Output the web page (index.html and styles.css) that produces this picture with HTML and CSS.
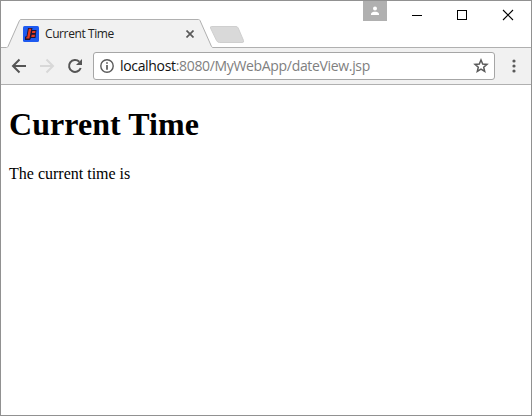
FILE: index.html
```html
<!DOCTYPE html>
<html lang="en">
<head>
<meta charset="utf-8">
<title>Current Time</title>
<link rel="stylesheet" href="styles.css">
</head>
<body>
<div class="window">
  <header class="tabstrip">
    <svg class="tab-shape" width="530" height="47" viewBox="1 1 530 47">
      <path d="M1 47.5H6.500Q7.500 47.5 8 46.5L19.500 20.500Q20 19.5 21 19.5H198.500Q199.500 19.5 200 20.500L211.500 46.500Q212 47.500 213 47.500H531V49H1Z" fill="#f1f1f1"/>
      <path d="M1 47.5H6.500Q7.500 47.500 8 46.500L19.500 20.500Q20 19.500 21 19.500H198.500Q199.500 19.500 200 20.500L211.500 46.500Q212 47.500 213 47.500H531" fill="none" stroke="#b0b0b0"/>
      <path d="M211.500 26.500H236Q237.500 26.500 238.200 28L243.500 40.500Q244.300 42.500 242 42.500H219.500Q217.500 42.500 216.500 40.500L210.500 28Q210 26.500 211.500 26.500Z" fill="#d9d9d9" stroke="#cfcfcf"/>
    </svg>
    <div class="tab">
      <svg class="favicon" width="16" height="16" viewBox="0 0 16 16">
        <rect width="16" height="16" rx="1.500" fill="#1e5af0"/>
        <path d="M5 2H9.500L9 4H13.500L13 7.500L12.500 12H8L7 14H2V10.500H3.500Z" fill="#1c1536"/>
        <path d="M5.800 2.800H8.300L6.400 12.500H3.200V11.200H4.200Z" fill="#e83b20"/>
        <path d="M9.300 5H12.500L12.200 7H8.900ZM8.700 8.800H12L11.600 11H8.200Z" fill="#e83b20"/>
      </svg>
      <span class="tab-title">Current Time</span>
      <svg class="tab-close" width="8" height="8" viewBox="0 0 8 8"><path d="M.5.5L7.500 7.500M7.500.5L.5 7.500" stroke="#5a5a5a" stroke-width="1.700"/></svg>
    </div>
    <div class="controls">
      <div class="profile"><svg width="24" height="20" viewBox="0 0 24 20"><circle cx="12" cy="7.500" r="2" fill="#fff"/><path d="M8 14V13C8 11.300 10.300 10.700 12 10.700S16 11.300 16 13V14Z" fill="#fff"/></svg></div>
      <svg class="sys" width="106" height="12" viewBox="0 0 106 12">
        <path d="M0 6.500H10" stroke="#000"/>
        <rect x="45.500" y="1.500" width="9" height="9" fill="none" stroke="#000"/>
        <path d="M91 1L101 11M101 1L91 11" stroke="#000" stroke-width="1.100"/>
      </svg>
    </div>
  </header>
  <nav class="toolbar">
    <svg class="nav-icons" width="84" height="36" viewBox="1 48 84 36" fill="none" stroke-width="2">
      <path d="M26 66H13M19.500 59.500L13 66L19.500 72.500" stroke="#555"/>
      <path d="M40 66H53M46.500 59.500L53 66L46.500 72.500" stroke="#d8d8d8"/>
      <path d="M79.300 61.700A6 6 0 1 0 80.700 68" stroke="#555"/>
      <path d="M82 59V65H76Z" fill="#555"/>
    </svg>
    <div class="address">
      <svg class="info" width="14" height="14" viewBox="0 0 14 14"><circle cx="7" cy="7" r="6.200" fill="none" stroke="#5a5a5a" stroke-width="1.400"/><path d="M7 3.300V4.800M7 6V10.700" stroke="#5a5a5a" stroke-width="1.700"/></svg>
      <span class="url">localhost<span class="path">:8080/MyWebApp/dateView.jsp</span></span>
      <svg class="star" width="16" height="16" viewBox="0 0 16 16"><path d="M8 2L9.700 6L14 6.400L10.700 9.200L11.700 13.400L8 11.200L4.300 13.400L5.300 9.200L2 6.400L6.300 6Z" fill="none" stroke="#5a5a5a" stroke-width="1.500"/></svg>
    </div>
    <svg class="menu" width="4" height="14" viewBox="0 0 4 14" fill="#5a5a5a"><circle cx="2" cy="2" r="1.600"/><circle cx="2" cy="7" r="1.600"/><circle cx="2" cy="12" r="1.600"/></svg>
  </nav>
  <main class="page">
    <h1>Current Time</h1>
    <p>The current time is</p>
  </main>
</div>
</body>
</html>
```
FILE: styles.css
```css
* { box-sizing: border-box; }
body { margin: 0; background: #fff; }
svg { display: block; flex: none; }
.window {
  display: flex;
  flex-direction: column;
  width: 532px;
  height: 416px;
  border: 1px solid #919191;
  overflow: hidden;
}
.tabstrip {
  position: relative;
  display: flex;
  justify-content: space-between;
  flex: none;
  height: 47px;
  font-family: "Open Sans", "Noto Sans", sans-serif;
}
.tab-shape { position: absolute; inset: 0; }
.tab {
  position: relative;
  display: flex;
  align-items: center;
  width: 193px;
  height: 28px;
  margin-top: 19px;
  padding-left: 22px;
}
.tab-title {
  margin-left: 6px;
  font-size: 12px;
  letter-spacing: -0.4px;
  line-height: 16px;
  color: #222;
  white-space: nowrap;
}
.tab-close { margin-left: auto; }
.controls { position: relative; display: flex; align-items: flex-start; }
.profile { width: 24px; height: 20px; background: #b0b0b0; }
.sys { margin: 8px 13px 0 25px; }
.toolbar {
  display: flex;
  align-items: center;
  flex: none;
  height: 37px;
  background: #f1f1f1;
  border-bottom: 1px solid #b0b0b0;
}
.address {
  display: flex;
  align-items: center;
  width: 402px;
  height: 28px;
  margin-left: 8px;
  padding: 0 5px 0 6px;
  background: #fff;
  border: 1px solid #a6a6a6;
  border-radius: 3px;
}
.url {
  margin-left: 6px;
  font: 14px/20px "Open Sans", "Noto Sans", sans-serif;
  letter-spacing: -0.33px;
  color: #111;
  white-space: nowrap;
}
.path { color: #808080; }
.star { margin-left: auto; }
.menu { margin-left: 17px; }
.page { padding: 0 8px; font-family: "Liberation Serif", serif; font-size: 16px; color: #000; }
h1 { margin: 21px 0 22px; font-size: 32px; line-height: 37px; letter-spacing: 0.05px; }
p { margin: 0; line-height: 18px; }
```
